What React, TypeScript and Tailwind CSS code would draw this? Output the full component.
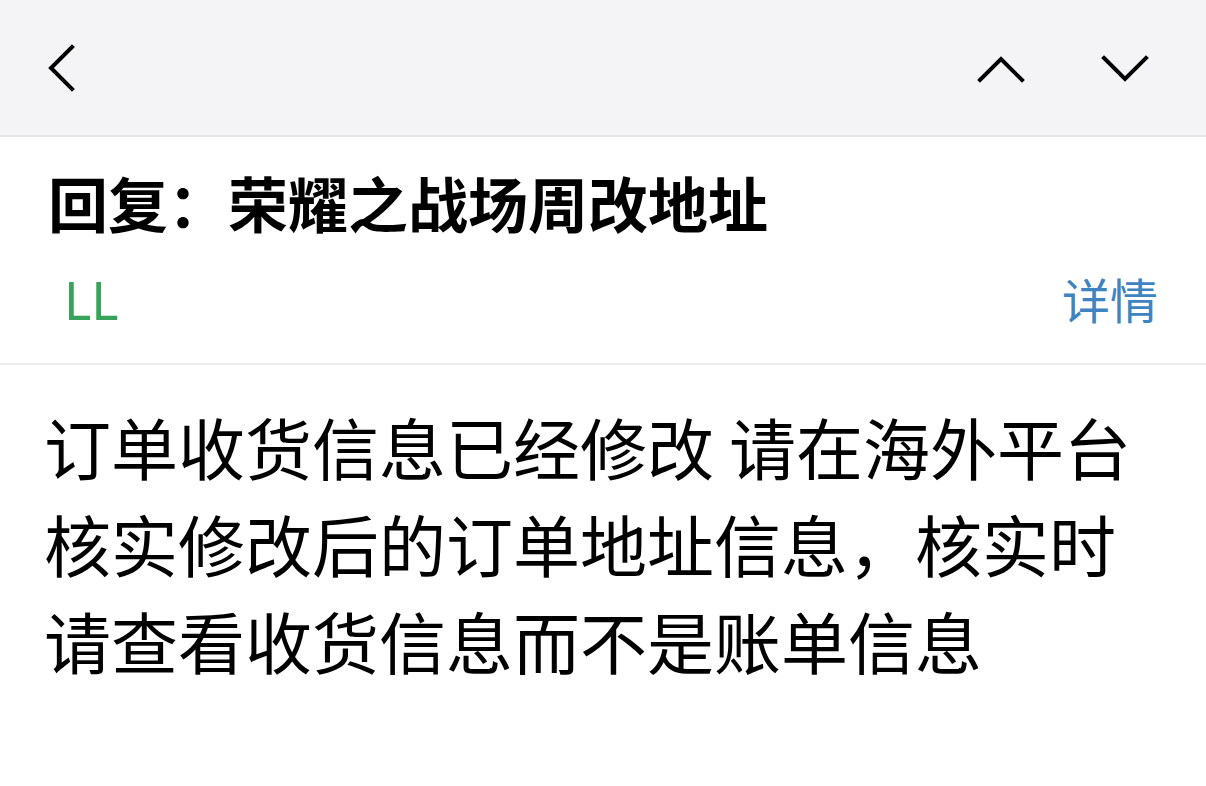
const font = { fontFamily: '"Noto Sans CJK SC", "Noto Sans", sans-serif' }

function Chevron({ d, className }: { d: string; className?: string }) {
  return (
    <svg viewBox="0 0 48 48" className={className} fill="none" stroke="#000" strokeWidth="4" strokeLinecap="square">
      <path d={d} />
    </svg>
  )
}

export default function App() {
  return (
    <div className="min-h-screen w-full bg-white text-black" style={font}>
      {/* top bar */}
      <div className="flex h-[137px] items-center border-b-2 border-[#e6e6e8] bg-[#f4f4f6] px-[36px]">
        <button className="flex size-[48px] items-center justify-center">
          <Chevron d="M36 3 L15 24 L36 45" className="h-[50px] w-[48px]" />
        </button>
        <div className="ml-auto flex items-center gap-[74px] pr-[20px]">
          <Chevron d="M3 36 L24 15 L45 36" className="h-[48px] w-[50px]" />
          <Chevron d="M3 14 L24 35 L45 14" className="h-[48px] w-[50px]" />
        </div>
      </div>

      {/* subject + sender */}
      <div className="border-b-2 border-[#ececec] px-[48px] pb-[33px] pt-[29px]">
        <h1 className="text-[60px] font-bold leading-[72px]">回复：荣耀之战场周改地址</h1>
        <div className="mt-[32px] flex h-[60px] items-center justify-between">
          <span className="pl-[16px] text-[52px] leading-[60px] text-[#37a35a]" style={{ fontFamily: '"Noto Sans", sans-serif' }}>
            LL
          </span>
          <span className="-mt-[4px] text-[48px] leading-[60px] text-[#3f84c0]">详情</span>
        </div>
      </div>

      {/* body */}
      <div className="px-[44px] pt-[32px]">
        <p className="text-[67px] leading-[97px]">
          订单收货信息已经修改 请在海外平台
          <br />
          核实修改后的订单地址信息，核实时
          <br />
          请查看收货信息而不是账单信息
        </p>
      </div>
    </div>
  )
}
